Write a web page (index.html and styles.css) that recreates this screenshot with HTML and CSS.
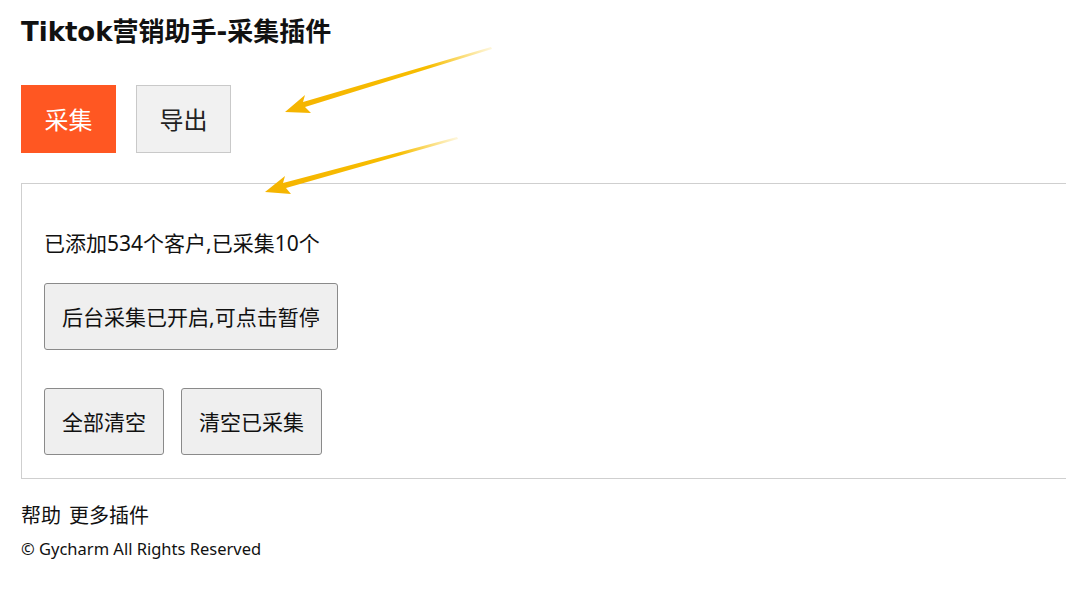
FILE: index.html
```html
<!DOCTYPE html>
<html lang="zh-CN">
<head>
    <meta charset="UTF-8">
    <meta name="viewport" content="width=device-width, initial-scale=1.0">
    <title>Tiktok营销助手-采集插件</title>
    <link rel="stylesheet" href="styles.css">
</head>
<body>
    <div class="page">
        <h1>Tiktok营销助手-采集插件</h1>
        <div class="actions">
            <button class="btn-primary">采集</button>
            <button class="btn-plain">导出</button>
        </div>
        <div class="panel">
            <p class="status">已添加534个客户,已采集10个</p>
            <button class="btn-gray">后台采集已开启,可点击暂停</button>
            <div class="panel-row">
                <button class="btn-gray">全部清空</button>
                <button class="btn-gray">清空已采集</button>
            </div>
        </div>
        <div class="links">
            <a href="#">帮助</a>
            <a href="#">更多插件</a>
        </div>
        <p class="copyright">© Gycharm All Rights Reserved</p>

        <!-- annotation arrows -->
        <svg class="arrows" width="1066" height="220" viewBox="0 0 1066 220">
            <defs>
                <linearGradient id="fade1" x1="490" y1="48" x2="285" y2="112" gradientUnits="userSpaceOnUse">
                    <stop offset="0" stop-color="#f7c000" stop-opacity="0.15"/>
                    <stop offset="0.3" stop-color="#f7bd00"/>
                    <stop offset="1" stop-color="#f5b400"/>
                </linearGradient>
                <linearGradient id="fade2" x1="456" y1="138" x2="265" y2="192" gradientUnits="userSpaceOnUse">
                    <stop offset="0" stop-color="#f7c000" stop-opacity="0.15"/>
                    <stop offset="0.3" stop-color="#f7bd00"/>
                    <stop offset="1" stop-color="#f5b400"/>
                </linearGradient>
            </defs>
            <path d="M491 47 L303 102 L305 95 L285 112 L311 113 L305 107 L492 49 Z" fill="url(#fade1)"/>
            <path d="M457 137 L283 183 L285 176 L265 192 L291 194 L286 188 L458 139 Z" fill="url(#fade2)"/>
        </svg>
    </div>
</body>
</html>
```

FILE: styles.css
```css
html {
    overflow-x: hidden;
}
body {
    margin: 0;
    font-family: "Noto Sans", "Noto Sans CJK SC", sans-serif;
    color: #111;
    background: #fff;
}
.page {
    position: relative;
    padding: 14px 0 0 21px;
}
h1 {
    margin: 0;
    font-family: "DejaVu Sans", "Noto Sans CJK SC", sans-serif;
    font-size: 26px;
    font-weight: 700;
    line-height: 36px;
}
.actions {
    display: flex;
    gap: 20px;
    margin-top: 35px;
}
button {
    font-family: inherit;
    cursor: pointer;
}
.btn-primary {
    width: 95px;
    height: 68px;
    padding-bottom: 3px;
    border: none;
    background: #ff5722;
    color: #fff;
    font-size: 24px;
}
.btn-plain {
    width: 95px;
    height: 68px;
    padding-bottom: 3px;
    border: 1px solid #c9c9c9;
    background: #f1f1f1;
    color: #222;
    font-size: 24px;
}
.panel {
    margin-top: 30px;
    border: 1px solid #cfcfcf;
    border-right: none;
    padding: 44px 0 23px 22px;
}
.status {
    margin: 0 0 25px;
    font-size: 21px;
    line-height: 30px;
}
.btn-gray {
    height: 67px;
    padding: 0 17px 2px;
    border: 1px solid #8a8a8a;
    border-radius: 3px;
    background: #efefef;
    color: #111;
    font-size: 21px;
}
.panel-row {
    display: flex;
    gap: 17px;
    margin-top: 38px;
}
.links {
    display: flex;
    gap: 8px;
    margin-top: 23px;
    font-size: 20px;
    line-height: 28px;
}
.links a {
    color: #111;
    text-decoration: none;
}
.copyright {
    margin: 7px 0 0;
    font-size: 16.5px;
    line-height: 24px;
}
.arrows {
    position: absolute;
    top: 0;
    left: 0;
    pointer-events: none;
}
```
